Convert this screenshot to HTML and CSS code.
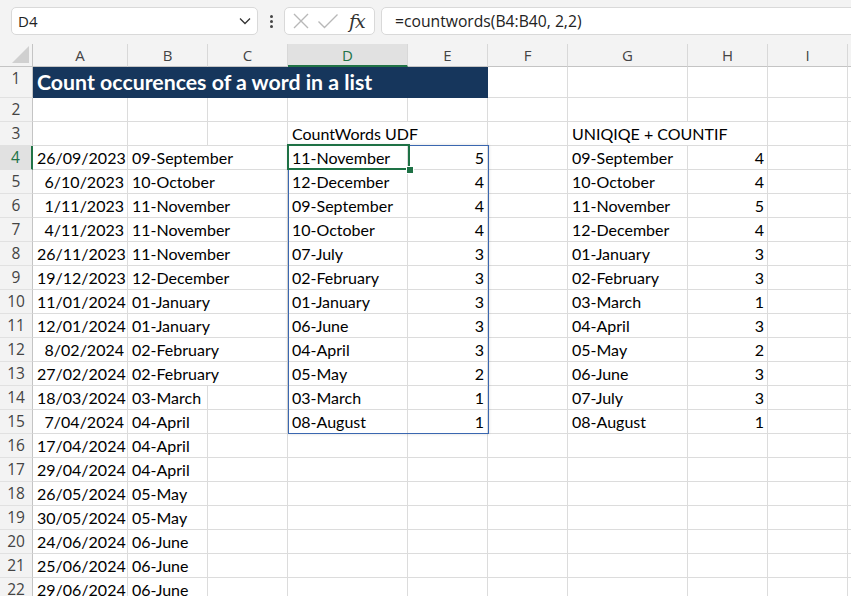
FILE: index.html
```html
<!DOCTYPE html>
<html>
<head>
<meta charset="utf-8">
<link rel="stylesheet" href="styles.css">
</head>
<body>
<div class="toolbar">
  <div class="namebox">
    <span class="nb-text">D4</span>
    <svg class="chev" width="12" height="8" viewBox="0 0 12 8"><path d="M1 1.5 L6 6.5 L11 1.5" fill="none" stroke="#333" stroke-width="1.3"/></svg>
  </div>
  <div class="dots"><span></span><span></span><span></span></div>
  <div class="fxbox">
    <svg width="18" height="18" viewBox="0 0 18 18"><path d="M2 2 L16 16 M16 2 L2 16" stroke="#b8b8b8" stroke-width="1.4" fill="none"/></svg>
    <svg width="22" height="18" viewBox="0 0 22 18"><path d="M1.5 9.5 L7.5 15.5 L20.5 2.5" stroke="#b8b8b8" stroke-width="1.4" fill="none"/></svg>
    <span class="fx">fx</span>
  </div>
  <div class="formula">=countwords(B4:B40, 2,2)</div>
</div>

<div class="sheet">
  <div class="corner"><span class="tri"></span></div>
  <div class="ch">A</div><div class="ch">B</div><div class="ch">C</div><div class="ch sel">D</div><div class="ch">E</div><div class="ch">F</div><div class="ch">G</div><div class="ch">H</div><div class="ch">I</div><div class="ch"></div>

  <div class="rh">1</div><div class="c title span5">Count occurences of a word in a list</div><div class="c"></div><div class="c"></div><div class="c"></div><div class="c"></div><div class="c"></div>

  <div class="rh">2</div><div class="c"></div><div class="c"></div><div class="c"></div><div class="c"></div><div class="c"></div><div class="c"></div><div class="c"></div><div class="c"></div><div class="c"></div><div class="c"></div>

  <div class="rh">3</div><div class="c"></div><div class="c"></div><div class="c"></div><div class="c span2">CountWords UDF</div><div class="c"></div><div class="c span2">UNIQIQE + COUNTIF</div><div class="c"></div><div class="c"></div>

  <div class="rh rsel">4</div><div class="c r">26/09/2023</div><div class="c span2">09-September</div><div class="c">11-November</div><div class="c r">5</div><div class="c"></div><div class="c">09-September</div><div class="c r">4</div><div class="c"></div><div class="c"></div>
  <div class="rh">5</div><div class="c r">6/10/2023</div><div class="c span2">10-October</div><div class="c">12-December</div><div class="c r">4</div><div class="c"></div><div class="c">10-October</div><div class="c r">4</div><div class="c"></div><div class="c"></div>
  <div class="rh">6</div><div class="c r">1/11/2023</div><div class="c span2">11-November</div><div class="c">09-September</div><div class="c r">4</div><div class="c"></div><div class="c">11-November</div><div class="c r">5</div><div class="c"></div><div class="c"></div>
  <div class="rh">7</div><div class="c r">4/11/2023</div><div class="c span2">11-November</div><div class="c">10-October</div><div class="c r">4</div><div class="c"></div><div class="c">12-December</div><div class="c r">4</div><div class="c"></div><div class="c"></div>
  <div class="rh">8</div><div class="c r">26/11/2023</div><div class="c span2">11-November</div><div class="c">07-July</div><div class="c r">3</div><div class="c"></div><div class="c">01-January</div><div class="c r">3</div><div class="c"></div><div class="c"></div>
  <div class="rh">9</div><div class="c r">19/12/2023</div><div class="c span2">12-December</div><div class="c">02-February</div><div class="c r">3</div><div class="c"></div><div class="c">02-February</div><div class="c r">3</div><div class="c"></div><div class="c"></div>
  <div class="rh">10</div><div class="c r">11/01/2024</div><div class="c span2">01-January</div><div class="c">01-January</div><div class="c r">3</div><div class="c"></div><div class="c">03-March</div><div class="c r">1</div><div class="c"></div><div class="c"></div>
  <div class="rh">11</div><div class="c r">12/01/2024</div><div class="c span2">01-January</div><div class="c">06-June</div><div class="c r">3</div><div class="c"></div><div class="c">04-April</div><div class="c r">3</div><div class="c"></div><div class="c"></div>
  <div class="rh">12</div><div class="c r">8/02/2024</div><div class="c span2">02-February</div><div class="c">04-April</div><div class="c r">3</div><div class="c"></div><div class="c">05-May</div><div class="c r">2</div><div class="c"></div><div class="c"></div>
  <div class="rh">13</div><div class="c r">27/02/2024</div><div class="c span2">02-February</div><div class="c">05-May</div><div class="c r">2</div><div class="c"></div><div class="c">06-June</div><div class="c r">3</div><div class="c"></div><div class="c"></div>
  <div class="rh">14</div><div class="c r">18/03/2024</div><div class="c">03-March</div><div class="c"></div><div class="c">03-March</div><div class="c r">1</div><div class="c"></div><div class="c">07-July</div><div class="c r">3</div><div class="c"></div><div class="c"></div>
  <div class="rh">15</div><div class="c r">7/04/2024</div><div class="c">04-April</div><div class="c"></div><div class="c">08-August</div><div class="c r">1</div><div class="c"></div><div class="c">08-August</div><div class="c r">1</div><div class="c"></div><div class="c"></div>
  <div class="rh">16</div><div class="c r">17/04/2024</div><div class="c">04-April</div><div class="c"></div><div class="c"></div><div class="c"></div><div class="c"></div><div class="c"></div><div class="c"></div><div class="c"></div><div class="c"></div>
  <div class="rh">17</div><div class="c r">29/04/2024</div><div class="c">04-April</div><div class="c"></div><div class="c"></div><div class="c"></div><div class="c"></div><div class="c"></div><div class="c"></div><div class="c"></div><div class="c"></div>
  <div class="rh">18</div><div class="c r">26/05/2024</div><div class="c">05-May</div><div class="c"></div><div class="c"></div><div class="c"></div><div class="c"></div><div class="c"></div><div class="c"></div><div class="c"></div><div class="c"></div>
  <div class="rh">19</div><div class="c r">30/05/2024</div><div class="c">05-May</div><div class="c"></div><div class="c"></div><div class="c"></div><div class="c"></div><div class="c"></div><div class="c"></div><div class="c"></div><div class="c"></div>
  <div class="rh">20</div><div class="c r">24/06/2024</div><div class="c">06-June</div><div class="c"></div><div class="c"></div><div class="c"></div><div class="c"></div><div class="c"></div><div class="c"></div><div class="c"></div><div class="c"></div>
  <div class="rh">21</div><div class="c r">25/06/2024</div><div class="c">06-June</div><div class="c"></div><div class="c"></div><div class="c"></div><div class="c"></div><div class="c"></div><div class="c"></div><div class="c"></div><div class="c"></div>
  <div class="rh">22</div><div class="c r">29/06/2024</div><div class="c">06-June</div><div class="c"></div><div class="c"></div><div class="c"></div><div class="c"></div><div class="c"></div><div class="c"></div><div class="c"></div><div class="c"></div>

  <div class="range"></div>
  <div class="active"></div>
  <div class="handle"></div>
</div>
</body>
</html>
```
FILE: styles.css
```css
html, body {
  margin: 0;
  padding: 0;
  background: #ffffff;
}
body {
  width: 851px;
  height: 596px;
  overflow: hidden;
  font-family: Lato, "Noto Sans", sans-serif;
}

/* ---------- toolbar ---------- */
.toolbar {
  height: 44px;
  background: #f3f3f3;
  display: flex;
  align-items: flex-start;
  padding-top: 7px;
  box-sizing: border-box;
  overflow: hidden;
}
.namebox {
  margin-left: 11px;
  width: 247px;
  height: 28px;
  background: #fff;
  border: 1px solid #d9d9d9;
  border-radius: 5px;
  box-sizing: border-box;
  display: flex;
  align-items: center;
  justify-content: space-between;
  padding: 0 6px 0 6px;
  font-family: "Open Sans", sans-serif;
  font-size: 15px;
  color: #222;
}
.dots {
  width: 26px;
  height: 28px;
  display: flex;
  flex-direction: column;
  align-items: center;
  justify-content: center;
  gap: 2px;
}
.dots span {
  width: 3px;
  height: 3px;
  background: #444;
  border-radius: 50%;
}
.fxbox {
  width: 91px;
  height: 28px;
  background: #fff;
  border: 1px solid #d9d9d9;
  border-radius: 5px;
  box-sizing: border-box;
  display: flex;
  align-items: center;
  padding-left: 7px;
  gap: 7px;
}
.fx {
  font-family: "DejaVu Serif", "Liberation Serif", serif;
  font-style: italic;
  font-size: 19px;
  color: #333;
  margin-left: 3px;
  letter-spacing: -1px;
}
.formula {
  flex: 1;
  margin-left: 6px;
  margin-right: -20px;
  height: 28px;
  background: #fff;
  border: 1px solid #d9d9d9;
  border-radius: 5px;
  box-sizing: border-box;
  padding-left: 13px;
  font-family: "Open Sans", sans-serif;
  font-size: 15.7px;
  line-height: 26px;
  color: #222;
}

/* ---------- sheet ---------- */
.sheet {
  position: relative;
  display: grid;
  grid-template-columns: 33px 95px 80px 80px 120px 80px 80px 120px 80px 80px 80px;
  grid-template-rows: 23px 31px repeat(21, 24px);
  width: 851px;
  overflow: hidden;
}
.corner {
  position: relative;
  background: #f3f3f3;
  border-right: 1px solid #c4c4c4;
  border-bottom: 1px solid #c4c4c4;
  box-sizing: border-box;
}
.tri {
  position: absolute;
  right: 3px;
  bottom: 3px;
  width: 0;
  height: 0;
  border-left: 17px solid transparent;
  border-bottom: 17px solid #d0d0d0;
}
.ch {
  background: #f3f3f3;
  border-right: 1px solid #d8d8d8;
  border-bottom: 1px solid #c4c4c4;
  box-sizing: border-box;
  text-align: center;
  font-family: "Open Sans", sans-serif;
  font-size: 15px;
  line-height: 22px;
  color: #444;
}
.ch.sel {
  background: #e1e1e1;
  color: #217346;
  border-bottom: 2px solid #217346;
}
.rh {
  background: #f3f3f3;
  border-right: 1px solid #c4c4c4;
  border-bottom: 1px solid #e1e1e1;
  box-sizing: border-box;
  text-align: center;
  font-family: "Open Sans", sans-serif;
  font-size: 15.5px;
  line-height: 23px;
  color: #444;
}
.rh.rsel {
  background: #e1e1e1;
  color: #217346;
  border-right: 2px solid #217346;
}
.c {
  border-right: 1px solid #dcdcdc;
  border-bottom: 1px solid #dcdcdc;
  box-sizing: border-box;
  padding: 0 3px 0 4px;
  font-size: 16px;
  line-height: 24px;
  color: #000;
  white-space: nowrap;
  overflow: hidden;
}
.c.r { text-align: right; }
.span2 { grid-column: span 2; }
.span5 { grid-column: span 5; }
.c.title {
  background: #16365c;
  border-color: #16365c;
  color: #fff;
  font-weight: bold;
  font-size: 21.3px;
  line-height: 31px;
  padding-left: 4px;
}

/* ---------- selection overlays ---------- */
.range {
  position: absolute;
  left: 288px;
  top: 101px;
  width: 201px;
  height: 289px;
  border: 1px solid #3a67b0;
  box-sizing: border-box;
  box-shadow: 0 0 3px rgba(0, 0, 0, 0.15);
  pointer-events: none;
}
.active {
  position: absolute;
  left: 287px;
  top: 100px;
  width: 123px;
  height: 26px;
  border: 2px solid #1e7145;
  box-sizing: border-box;
}
.handle {
  position: absolute;
  left: 406px;
  top: 122px;
  width: 6px;
  height: 6px;
  background: #1e7145;
  border: 1px solid #fff;
}
```
